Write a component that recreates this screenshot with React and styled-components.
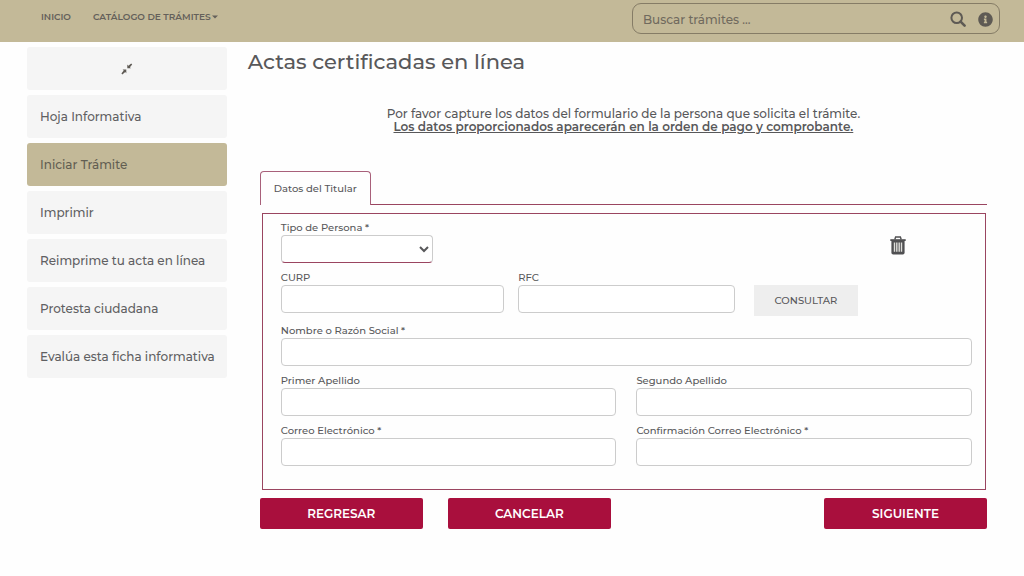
import React, { useState } from 'react';
import styled, { createGlobalStyle } from 'styled-components';
import { FaInfoCircle } from 'react-icons/fa';

const GlobalStyle = createGlobalStyle`
  * {
    box-sizing: border-box;
  }

  body {
    margin: 0;
    background: #fefefe;
    color: #58585a;
    font-family: Montserrat, Inter, sans-serif;
    font-size: 12px;
    font-weight: 500;
  }

  button, input, select {
    font: inherit;
    color: inherit;
  }
`;

const Header = styled.header`
  display: flex;
  justify-content: space-between;
  align-items: flex-start;
  height: 42px;
  padding: 3px 24px 0 41px;
  background: #c3b998;
`;

const Nav = styled.nav`
  display: flex;
  gap: 22px;
  padding-top: 7px;
`;

const NavLink = styled.a`
  display: flex;
  align-items: center;
  gap: 1px;
  color: #64605a;
  font-size: 9px;
  font-weight: 600;
  line-height: 14px;
  text-decoration: none;
`;

const Search = styled.form`
  display: flex;
  align-items: center;
  gap: 12px;
  width: 368px;
  height: 31px;
  padding: 1px 6px 0 10px;
  border: 1px solid #857c66;
  border-radius: 9px;
`;

const SearchInput = styled.input`
  flex: 1;
  min-width: 0;
  padding: 0;
  border: 0;
  outline: 0;
  background: transparent;

  &::placeholder {
    color: #706a5e;
    opacity: 1;
  }
`;

const IconButton = styled.button`
  display: flex;
  justify-content: center;
  align-items: center;
  padding: 0;
  border: 0;
  background: none;
  color: #5e5a54;
  cursor: pointer;
`;

const Page = styled.div`
  display: flex;
  align-items: flex-start;
  gap: 21px;
  padding: 5px 37px 40px 27px;
`;

const Sidebar = styled.aside`
  display: flex;
  flex-direction: column;
  flex: 0 0 199px;
  gap: 5px;
`;

const Collapse = styled(IconButton)`
  height: 43px;
  border-radius: 3px;
  background: #f5f5f5;
`;

const SideLink = styled.a`
  display: flex;
  align-items: center;
  height: 43px;
  padding: 0 12px 0 13px;
  border-radius: 3px;
  background: ${props => (props.$active ? '#c3b998' : '#f5f5f5')};
  color: ${props => (props.$active ? '#625e52' : '#606062')};
  text-decoration: none;
  white-space: nowrap;
`;

const Main = styled.main`
  flex: 1;
  min-width: 0;
`;

const Title = styled.h1`
  margin: 0;
  font-size: 21px;
  font-weight: 500;
  line-height: 30px;
`;

const Content = styled.div`
  padding-left: 12px;
`;

const Intro = styled.p`
  margin: 30px 0 38px;
  line-height: 13px;
  text-align: center;
`;

const Strong = styled.strong`
  font-weight: 600;
  text-decoration: underline;
`;

const Tabs = styled.div`
  display: flex;
  border-bottom: 1px solid #9a4560;
`;

const Tab = styled.button`
  height: 34px;
  margin-bottom: -1px;
  padding: 0 13px;
  border: 1px solid #a8607a;
  border-bottom: 0;
  border-radius: 4px 4px 0 0;
  background: #fefefe;
  font-size: 10px;
`;

const Panel = styled.section`
  display: flex;
  flex-direction: column;
  gap: 7px;
  margin: 8px 1px 8px 2px;
  padding: 6px 13px 23px 18px;
  border: 1px solid #9a4560;
`;

const Row = styled.div`
  display: grid;
  grid-template-columns: ${props => props.$columns || '1fr'};
  column-gap: ${props => props.$gap || 0}px;
`;

const Field = styled.div`
  display: flex;
  flex-direction: column;
  min-width: 0;
`;

const Label = styled.label`
  font-size: 10px;
  line-height: 15px;
`;

const Input = styled.input`
  width: 100%;
  height: 28px;
  padding: 0 8px;
  border: 1px solid #ccc;
  border-radius: 4px;
  background: #fff;
`;

const Select = styled.select`
  width: 152px;
  height: 28px;
  border: 1px solid #ccc;
  border-bottom-color: #9a4560;
  border-radius: 4px;
  background: #fff;
`;

const Delete = styled(IconButton)`
  align-self: end;
  height: 36px;
  color: #505052;
`;

const Consult = styled.button`
  justify-self: start;
  height: 31px;
  margin: 15px 0 0 5px;
  padding: 0 21px;
  border: 0;
  background: #eee;
  font-size: 10px;
`;

const Actions = styled.div`
  display: flex;
  gap: 25px;
`;

const Action = styled.button`
  width: 163px;
  height: 31px;
  margin-left: ${props => (props.$end ? 'auto' : '0')};
  border: 0;
  border-radius: 2px;
  background: #a90f3d;
  color: #fff;
  font-weight: 600;
`;

const links = [
  'Hoja Informativa',
  'Iniciar Trámite',
  'Imprimir',
  'Reimprime tu acta en línea',
  'Protesta ciudadana',
  'Evalúa esta ficha informativa'
];

const CaretIcon = () => (
  <svg width="6" height="4" viewBox="0 0 6 4" fill="currentColor">
    <path d="M0 0.5H6L3 3.5Z" />
  </svg>
);

const SearchIcon = () => (
  <svg width="16" height="16" viewBox="0 0 16 16" fill="none" stroke="currentColor">
    <circle cx="6.7" cy="6.7" r="5.3" strokeWidth="2" />
    <path d="M10.6 10.6L14.6 14.6" strokeWidth="2.6" strokeLinecap="round" />
  </svg>
);

const ShrinkIcon = () => (
  <svg width="12" height="12" viewBox="0 0 12 12" fill="currentColor">
    <path d="M6.3 1.6L7.4 2.7L10.2 0.4L11.2 1.4L8.9 4.2L10 5.3H6.3Z" />
    <path d="M1.6 6.5H5.3V10.2L4.2 9.1L1.4 11.4L0.4 10.4L2.7 7.6Z" />
  </svg>
);

const TrashIcon = () => (
  <svg width="16" height="19" viewBox="0 0 16 19">
    <path d="M4.8 3.5L5.6 1H10.4L11.2 3.5" fill="none" stroke="currentColor" strokeWidth="1.4" />
    <path d="M0.3 3.2H15.7V5H0.3Z" fill="currentColor" />
    <path d="M1.4 4.5H14.6V16.8Q14.6 18.6 12.8 18.6H3.2Q1.4 18.6 1.4 16.8Z" fill="currentColor" />
    <path d="M4.5 6.4V15.8M6.8 6.4V15.8M9.2 6.4V15.8M11.5 6.4V15.8" stroke="#dededa" strokeWidth="1.4" />
  </svg>
);

const TextField = ({ id, label, type = 'text' }) => (
  <Field>
    <Label htmlFor={id}>{label}</Label>
    <Input id={id} name={id} type={type} />
  </Field>
);

export default function App() {
  const [active, setActive] = useState('Iniciar Trámite');

  return (
    <>
      <GlobalStyle />
      <Header>
        <Nav>
          <NavLink href="#inicio">INICIO</NavLink>
          <NavLink href="#catalogo">CATÁLOGO DE TRÁMITES<CaretIcon /></NavLink>
        </Nav>
        <Search onSubmit={e => e.preventDefault()}>
          <SearchInput type="text" placeholder="Buscar trámites ..." aria-label="Buscar trámites" />
          <IconButton type="submit" aria-label="Buscar"><SearchIcon /></IconButton>
          <IconButton type="button" aria-label="Información"><FaInfoCircle size={15} /></IconButton>
        </Search>
      </Header>
      <Page>
        <Sidebar>
          <Collapse type="button" aria-label="Contraer menú"><ShrinkIcon /></Collapse>
          {links.map(link => (
            <SideLink key={link} href="#tramite" $active={link === active} onClick={() => setActive(link)}>
              {link}
            </SideLink>
          ))}
        </Sidebar>
        <Main>
          <Title>Actas certificadas en línea</Title>
          <Content>
            <Intro>
              Por favor capture los datos del formulario de la persona que solicita el trámite.
              <br />
              <Strong>Los datos proporcionados aparecerán en la orden de pago y comprobante.</Strong>
            </Intro>
            <Tabs role="tablist">
              <Tab type="button" role="tab" aria-selected="true">Datos del Titular</Tab>
            </Tabs>
            <Panel>
              <Row $columns="1fr 148px">
                <Field>
                  <Label htmlFor="tipo">Tipo de Persona *</Label>
                  <Select id="tipo" name="tipo" defaultValue="">
                    <option value="" aria-label="Sin selección"></option>
                  </Select>
                </Field>
                <Delete type="button" aria-label="Eliminar"><TrashIcon /></Delete>
              </Row>
              <Row $columns="32fr 31fr 32fr" $gap={14}>
                <TextField id="curp" label="CURP" />
                <TextField id="rfc" label="RFC" />
                <Consult type="button">CONSULTAR</Consult>
              </Row>
              <Row>
                <TextField id="nombre" label="Nombre o Razón Social *" />
              </Row>
              <Row $columns="1fr 1fr" $gap={20}>
                <TextField id="primerApellido" label="Primer Apellido" />
                <TextField id="segundoApellido" label="Segundo Apellido" />
              </Row>
              <Row $columns="1fr 1fr" $gap={20}>
                <TextField id="correo" label="Correo Electrónico *" type="email" />
                <TextField id="confirmacion" label="Confirmación Correo Electrónico *" type="email" />
              </Row>
            </Panel>
            <Actions>
              <Action type="button">REGRESAR</Action>
              <Action type="button">CANCELAR</Action>
              <Action type="button" $end>SIGUIENTE</Action>
            </Actions>
          </Content>
        </Main>
      </Page>
    </>
  );
}
